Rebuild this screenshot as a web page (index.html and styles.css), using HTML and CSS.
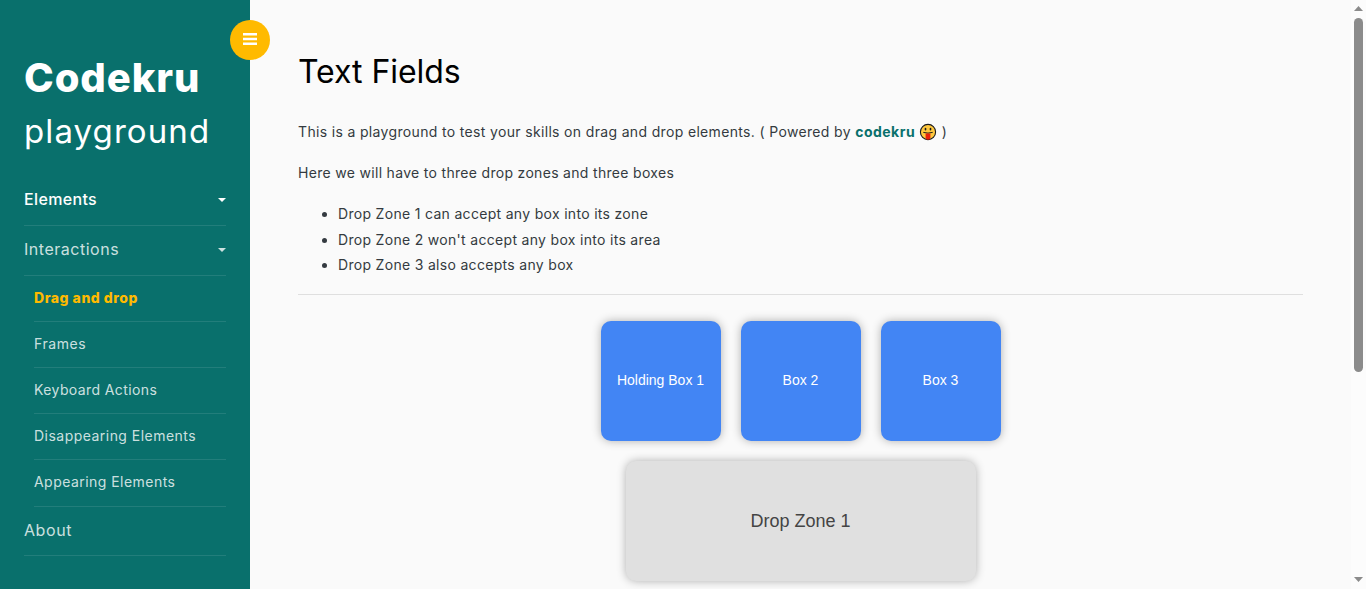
FILE: index.html
```html
<!DOCTYPE html>
<html lang="en">
<head>
<meta charset="utf-8">
<title>Codekru playground</title>
<link rel="stylesheet" href="styles.css">
</head>
<body>
<div class="wrapper">
  <nav class="sidebar">
    <button class="toggle" aria-label="Toggle menu">
      <svg width="14" height="12" viewBox="0 0 14 12" fill="#fff"><path d="M0 0h14v2.600H0zM0 4.700h14v2.600H0zM0 9.400h14V12H0z"/></svg>
    </button>
    <h1 class="brand"><span class="brand-name">Codekru</span><span class="brand-sub">playground</span></h1>
    <ul class="menu">
      <li class="item"><a class="link current elements">Elements<i class="caret"></i></a></li>
      <li class="item"><a class="link interactions">Interactions<i class="caret"></i></a>
        <ul class="submenu">
          <li><a class="sublink active">Drag and drop</a></li>
          <li><a class="sublink frames">Frames</a></li>
          <li><a class="sublink keyboard">Keyboard Actions</a></li>
          <li><a class="sublink">Disappearing Elements</a></li>
          <li><a class="sublink appearing">Appearing Elements</a></li>
        </ul>
      </li>
      <li class="item"><a class="link about">About</a></li>
    </ul>
  </nav>
  <main class="content">
    <h2 class="title">Text Fields</h2>
    <p class="text intro">This is a playground to test your skills on drag and drop elements. ( Powered by <b class="site">codekru</b> <svg class="emoji" width="18" height="18" viewBox="0 0 18 18"><circle cx="9" cy="9" r="7.600" fill="#ffc83d" stroke="#1b1b1b" stroke-width="1.100"/><path d="M6.500 5.500v1.300M11.500 5.500v1.300" stroke="#1b1b1b" stroke-width="1.600" stroke-linecap="round"/><path d="M4.700 9.500q4.300 1.400 8.600 0" fill="none" stroke="#1b1b1b" stroke-width="1" stroke-linecap="round"/><path d="M6.600 10.500h4.800v4a2.400 2.300 0 0 1-4.800 0z" fill="#e8210c"/></svg> )</p>
    <p class="text">Here we will have to three drop zones and three boxes</p>
    <ul class="text rules">
      <li>Drop Zone 1 can accept any box into its zone</li>
      <li>Drop Zone 2 won't accept any box into its area</li>
      <li>Drop Zone 3 also accepts any box</li>
    </ul>
    <hr class="rule">
    <section class="board">
      <div class="boxes">
        <div class="box">Holding Box 1</div>
        <div class="box">Box 2</div>
        <div class="box">Box 3</div>
      </div>
      <div class="zone">Drop Zone 1</div>
    </section>
  </main>
  <div class="scrollbar">
    <svg width="9" height="5" viewBox="0 0 9 5" fill="#8b8b8b"><path d="M4.500 0L9 5H0z"/></svg>
    <div class="thumb"></div>
    <svg class="down" width="9" height="5" viewBox="0 0 9 5" fill="#8b8b8b"><path d="M0 0h9L4.500 5z"/></svg>
  </div>
</div>
</body>
</html>
```
FILE: styles.css
```css
* { box-sizing: border-box; }
body { margin: 0; overflow: hidden; background: #fafafa; color: #343a40; font-family: Inter, "Open Sans", sans-serif; font-size: 14px; line-height: 25.2px; }
.wrapper { display: flex; height: 589px; overflow: hidden; }
ul { list-style: none; margin: 0; padding: 0; }

.sidebar { position: relative; flex: 0 0 250px; padding: 52px 24px 0; background: #09706c; }
.toggle { position: absolute; top: 20px; right: -20px; width: 40px; height: 40px; padding: 0 0 2px; border: 0; border-radius: 50%; background: #ffba00; display: flex; align-items: center; justify-content: center; }
.brand { margin: 0 0 18px; color: #fff; font-size: 40px; font-weight: 800; line-height: 54px; }
.brand span { display: block; white-space: nowrap; }
.brand .brand-name { line-height: 52px; letter-spacing: .9px; }
.brand .brand-sub { font-size: 33px; font-weight: 400; letter-spacing: 1.100px; }

.link, .sublink { display: flex; align-items: center; justify-content: space-between; border-bottom: 1px solid rgba(255, 255, 255, .1); color: rgba(255, 255, 255, .8); white-space: nowrap; }
.link { height: 50px; padding-bottom: 2px; font-size: 16px; }
.elements { letter-spacing: .35px; }
.interactions { letter-spacing: .52px; }
.about { height: 49px; padding: 0; letter-spacing: .570px; }
.current { color: #fff; font-weight: 500; }
.caret { width: 0; height: 0; border: 4px solid transparent; border-top-color: currentColor; border-bottom: 0; }
.submenu { padding-left: 10px; }
.sublink { height: 46px; padding-bottom: 1px; letter-spacing: .47px; }
.active { color: #ffba00; font-weight: 800; letter-spacing: .53px; }
.frames { letter-spacing: .58px; }
.keyboard { letter-spacing: .4px; }
.appearing { height: 47px; padding-bottom: 2px; letter-spacing: .46px; }

.content { flex: 1; min-width: 0; padding: 48px 48px 0; }
.title { margin: 0 0 23.600px; color: #000; font-size: 32px; font-weight: 400; letter-spacing: -.05px; line-height: 47.400px; }
.text { margin: 0 0 16px; letter-spacing: .31px; white-space: nowrap; }
.intro { letter-spacing: .34px; }
.site { color: #09706c; font-weight: 700; letter-spacing: .49px; }
.emoji { vertical-align: -4px; margin-top: -4px; }
.rules { padding-left: 40px; list-style: disc; }
.rule { margin: 17px 0 26px; border: 0; border-top: 1px solid #dfdfdf; }
.board { display: flex; flex-direction: column; align-items: center; gap: 20px; font-family: "Liberation Sans", Arial, sans-serif; }
.boxes { display: flex; gap: 20px; }
.box, .zone { display: flex; align-items: center; justify-content: center; height: 120px; border-radius: 10px; box-shadow: 0 0 10px rgba(0, 0, 0, .3); }
.box { width: 120px; padding-bottom: 1px; background: #4285f4; color: #fff; }
.zone { width: 350px; padding-top: 1px; background: #e0e0e0; color: #444; font-size: 18px; }

.scrollbar { flex: 0 0 15px; display: flex; flex-direction: column; align-items: center; padding: 6px 0 7px; background: #fcfcfc; }
.thumb { width: 9px; height: 354px; margin-top: 7px; border-radius: 5px; background: #8b8b8b; }
.down { margin-top: auto; }
```
